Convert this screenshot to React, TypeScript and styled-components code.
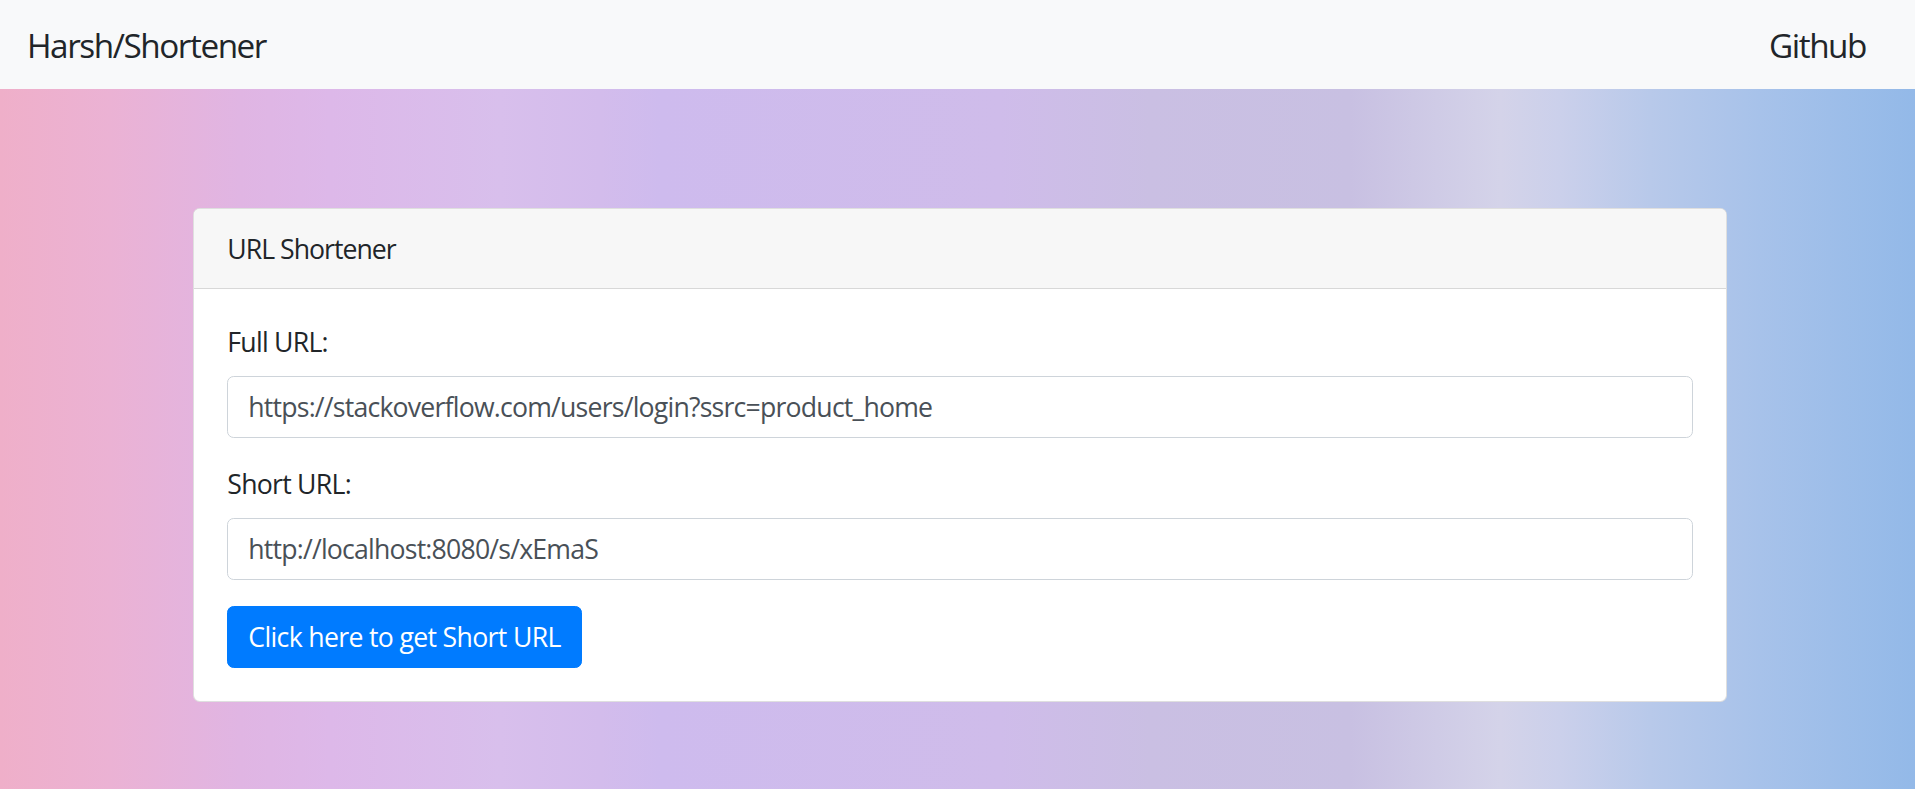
import React from "react";
import styled, { createGlobalStyle } from "styled-components";

const Global = createGlobalStyle`
  html, body { margin: 0; padding: 0; }
  body {
    font-family: "Segoe UI", "Open Sans", "Noto Sans", "Liberation Sans", sans-serif;
    color: #212529;
  }
  * { box-sizing: border-box; }
`;

const Page = styled.div`
  min-height: 100vh;
  display: flex;
  flex-direction: column;
  background: linear-gradient(
    90deg,
    #efafc9 0px,
    #ebb2d4 110px,
    #e0b5e3 240px,
    #ddb8e9 330px,
    #d8bfec 500px,
    #d3bcec 600px,
    #cebbee 660px,
    #cfbcea 1000px,
    #cabfe3 1150px,
    #c8c0e2 1350px,
    #d4d3e9 1500px,
    #cbd0eb 1560px,
    #b8c9ea 1650px,
    #a7c2ea 1760px,
    #93b9e8 1915px
  );
`;

const NavBar = styled.nav`
  height: 89px;
  background: #f8f9fa;
  display: flex;
  align-items: center;
  justify-content: space-between;
  padding: 0 49px 0 27px;
`;

const NavText = styled.a`
  font-size: 33.3px;
  line-height: 50px;
  letter-spacing: -1.45px;
  color: #212529;
  text-decoration: none;
`;

const Main = styled.main`
  padding: 119px 188px 0 193px;
`;

const Card = styled.section`
  background: #fff;
  border: 1px solid rgba(0, 0, 0, 0.125);
  border-radius: 6.67px;
  overflow: hidden;
  letter-spacing: -0.75px;
`;

const CardHeader = styled.header`
  background: #f7f7f7;
  border-bottom: 1px solid rgba(0, 0, 0, 0.125);
  padding: 20px 33.3px;
  font-size: 26.67px;
  line-height: 39px;
  letter-spacing: -1px;
`;

const CardBody = styled.div`
  padding: 33.3px 33.3px 32.5px;
  display: flex;
  flex-direction: column;
  align-items: flex-start;
`;

const FormGroup = styled.div`
  width: 100%;
  display: flex;
  flex-direction: column;
  margin-bottom: 26.67px;
`;

const Label = styled.label`
  font-size: 26.67px;
  line-height: 40px;
  margin-bottom: 13.33px;
`;

const Input = styled.input`
  width: 100%;
  height: 62px;
  padding: 10px 20px;
  font: inherit;
  font-size: 26.67px;
  line-height: 40px;
  letter-spacing: -0.8px;
  color: #495057;
  background: #fff;
  border: 1px solid #ced4da;
  border-radius: 6.67px;
  outline: none;
`;

const Button = styled.button`
  height: 62px;
  padding: 10px 20px;
  font: inherit;
  font-size: 26.67px;
  line-height: 40px;
  letter-spacing: -0.67px;
  color: #fff;
  background: #007bff;
  border: 1px solid #007bff;
  border-radius: 6.67px;
  cursor: pointer;
`;

export default function App() {
  return (
    <>
      <Global />
      <Page>
        <NavBar>
          <NavText href="#">Harsh/Shortener</NavText>
          <NavText href="#">Github</NavText>
        </NavBar>
        <Main>
          <Card>
            <CardHeader>URL Shortener</CardHeader>
            <CardBody>
              <FormGroup>
                <Label>Full URL:</Label>
                <Input readOnly defaultValue="https://stackoverflow.com/users/login?ssrc=product_home" />
              </FormGroup>
              <FormGroup>
                <Label>Short URL:</Label>
                <Input readOnly defaultValue="http://localhost:8080/s/xEmaS" />
              </FormGroup>
              <Button>Click here to get Short URL</Button>
            </CardBody>
          </Card>
        </Main>
      </Page>
    </>
  );
}
